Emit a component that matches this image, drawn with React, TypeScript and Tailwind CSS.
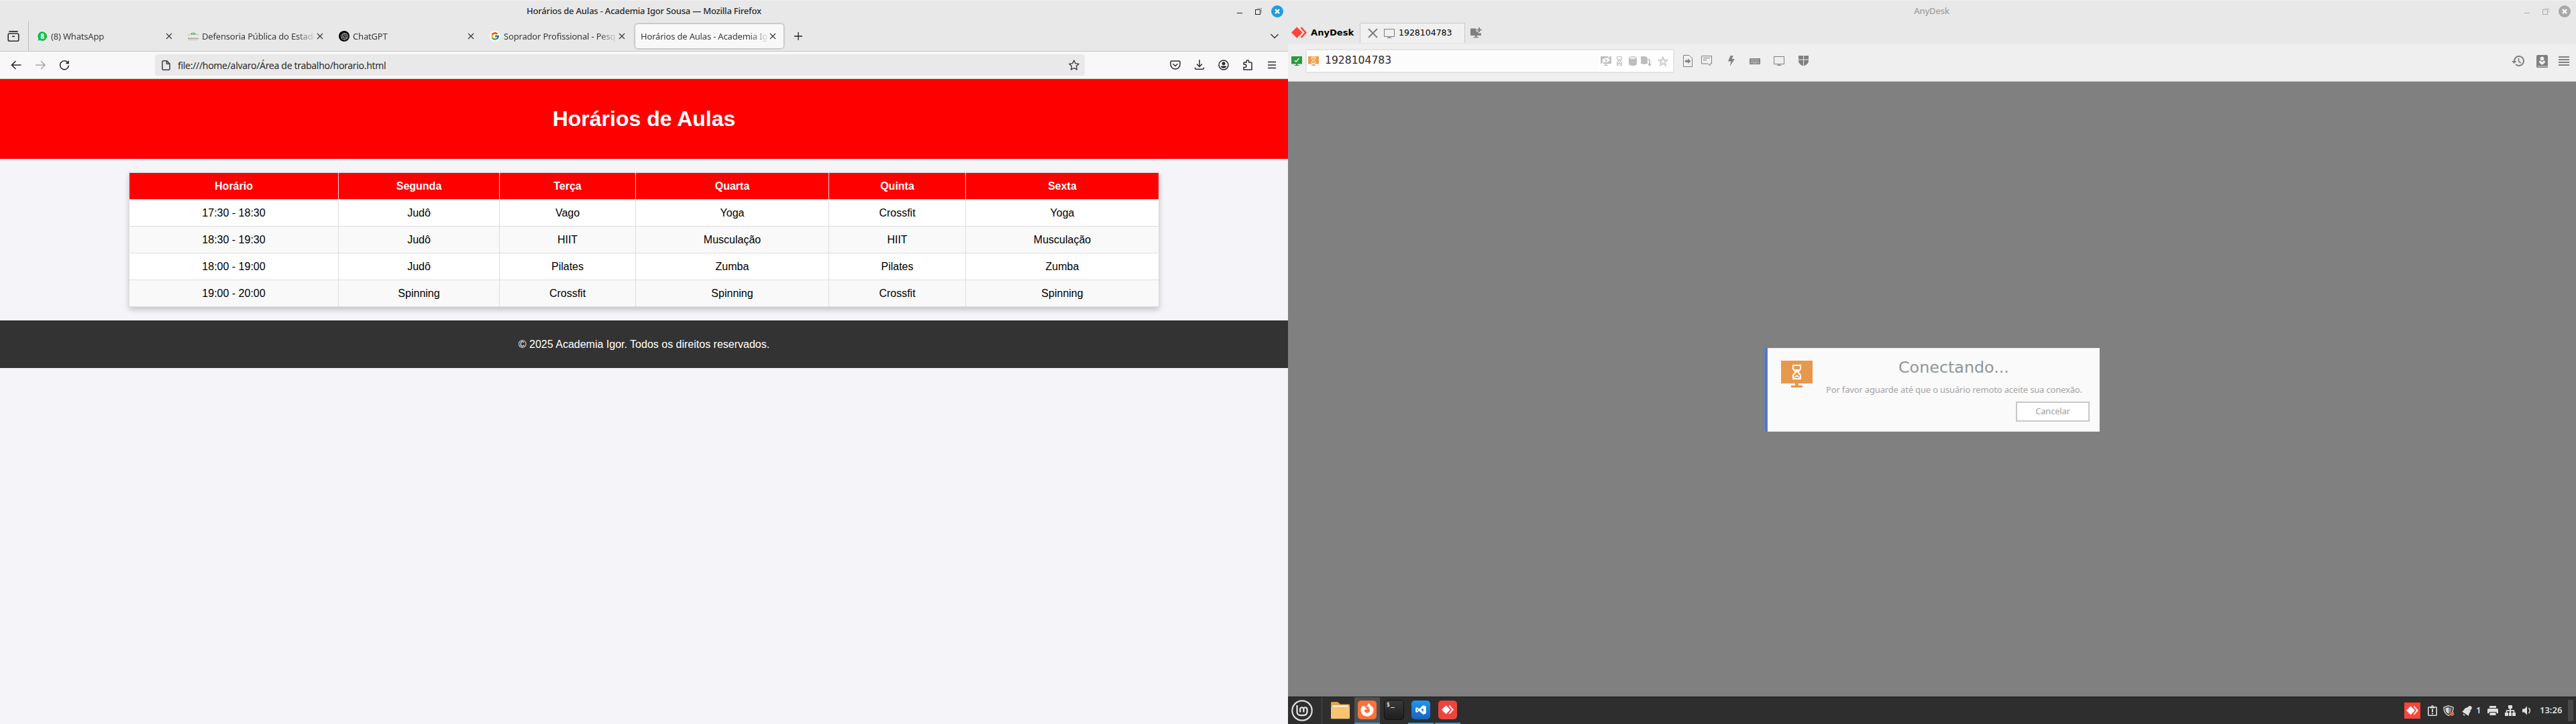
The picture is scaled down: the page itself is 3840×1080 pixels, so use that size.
import type { ReactNode } from 'react';
import { FaFirefoxBrowser } from 'react-icons/fa';
import { FcGoogle } from 'react-icons/fc';
import { SiOpenai } from 'react-icons/si';

const UI = "font-['Noto_Sans',sans-serif]";
const DEJAVU = "font-['DejaVu_Sans',sans-serif]";

/* ---------- window buttons ---------- */

function WindowButtons({ active }: { active: boolean }) {
  const ink = active ? '#222' : '#a9a9a9';
  const faint = active ? '#999' : '#c8c8c8';
  return (
    <svg width="70" height="20" viewBox="0 0 70 20" className="shrink-0" fill="none">
      <path d="M0 12.5h8" stroke={ink} />
      <path d="M30 5.5h6.5v7" stroke={faint} />
      <rect x="27.5" y="7.5" width="7" height="7" stroke={ink} />
      <circle cx="60" cy="10" r="9" fill={active ? '#1f9ede' : '#a9a9a9'} />
      <path d="m57 7 6 6m0-6-6 6" stroke="#fff" strokeWidth="2.3" />
    </svg>
  );
}

/* ---------- Firefox ---------- */

function CloseX() {
  return (
    <svg width="10" height="10" viewBox="0 0 10 10" className="shrink-0" fill="none" stroke="#333" strokeWidth="1.1">
      <path d="m1 1 8 8m0-8-8 8" />
    </svg>
  );
}

function Tab({ icon, label }: { icon: ReactNode; label: string }) {
  return (
    <div className="flex h-full w-[225px] shrink-0 items-center pl-[9px]">
      <span className="flex w-4 shrink-0 justify-center">{icon}</span>
      <span className="ml-[5px] w-[167px] shrink-0 overflow-hidden pt-px whitespace-nowrap mask-[linear-gradient(to_right,#000_142px,transparent_170px)]">
        {label}
      </span>
      <span className="ml-[4px] flex">
        <CloseX />
      </span>
    </div>
  );
}

function WhatsAppIcon() {
  return (
    <span className="relative flex h-4 w-4 items-center justify-center">
      <svg width="16" height="16" viewBox="0 0 16 16" className="absolute inset-0">
        <path d="M8 0a8 8 0 1 1-3.6 15.2L0 16l1-4A8 8 0 0 1 8 0Z" fill="#f4fbf5" />
        <path d="M8 1a7 7 0 1 1-3.4 13.1L1.3 15l1-3.2A7 7 0 0 1 8 1Z" fill="#14bf45" />
      </svg>
      <span className="relative text-[10px] leading-none font-bold tracking-normal text-white">8</span>
    </span>
  );
}

function DefensoriaIcon() {
  return (
    <svg width="16" height="14" viewBox="0 0 16 14" fill="none">
      <path d="M1 6V4M3.2 5V3" stroke="#c9c96a" strokeWidth="1.3" />
      <path d="M5.6 5V2M8 5V1.4M10.4 5V2" stroke="#45a06a" strokeWidth="1.4" />
      <path d="M12.8 5V3M15 6V4" stroke="#a8cf8a" strokeWidth="1.3" />
      <path d="M0 10.4h16" stroke="#999" strokeWidth="1.6" strokeDasharray="2 .5" />
      <path d="M1 12.6h14" stroke="#c4c4c4" />
    </svg>
  );
}

function FirefoxTabs() {
  return (
    <div className={`${UI} flex h-11 shrink-0 items-center text-[13px] tracking-[-0.18px] text-[#3a3a3a]`}>
      <svg width="18" height="16" viewBox="0 0 18 16" className="ml-[11px] shrink-0" fill="none" stroke="#2b2b2b" strokeWidth="1.6">
        <path d="M3 .9h12" strokeLinecap="round" />
        <rect x="1.2" y="4" width="15.6" height="11.2" rx="2" />
        <path d="M7 8.3h4" />
      </svg>
      <div className="ml-[13px] h-full w-px shrink-0 bg-[#bdbdbd]" />
      <div className="ml-[3px] flex h-full shrink-0">
        <Tab icon={<WhatsAppIcon />} label="(8) WhatsApp" />
        <Tab icon={<DefensoriaIcon />} label="Defensoria Pública do Estado" />
        <Tab
          icon={
            <span className="flex h-4 w-4 shrink-0 items-center justify-center rounded-full bg-black">
              <SiOpenai size={11} color="#ddd" />
            </span>
          }
          label="ChatGPT"
        />
        <Tab
          icon={
            <span className="flex h-4 w-4 shrink-0 items-center justify-center rounded-full bg-white">
              <FcGoogle size={14} />
            </span>
          }
          label="Soprador Profissional - Pesquisa"
        />
      </div>
      <div className="ml-px flex h-9 w-[221px] shrink-0 items-center rounded-[4px] bg-[#f8f8f8] pl-2 shadow-[0_0_3px_rgba(0,0,0,0.5)]">
        <span className="w-[190px] overflow-hidden pt-px whitespace-nowrap mask-[linear-gradient(to_right,#000_162px,transparent_192px)]">
          Horários de Aulas - Academia Igor Sousa
        </span>
        <span className="ml-[2px] flex">
          <CloseX />
        </span>
      </div>
      <svg width="12" height="12" viewBox="0 0 12 12" className="ml-4 shrink-0" fill="none" stroke="#222" strokeWidth="1.3">
        <path d="M6 0v12M0 6h12" />
      </svg>
      <svg width="12" height="8" viewBox="0 0 12 8" className="mr-3.5 ml-auto shrink-0" fill="none" stroke="#333" strokeWidth="1.4">
        <path d="m.5 1 5.5 5.6L11.500 1" />
      </svg>
    </div>
  );
}

function FirefoxNav() {
  return (
    <div className="flex h-[42px] shrink-0 items-center border-y border-[#c6c6c6] bg-[#f8f8f8] text-[#2b2b2b]">
      <svg width="88" height="16" viewBox="0 0 88 16" className="ml-4 shrink-0" fill="none" strokeWidth="1.6">
        <path d="M15.500 8H1.500M7.500 2 1.500 8l6 6" stroke="#2b2b2b" />
        <path d="M37 8h14M45 2l6 6-6 6" stroke="#a8a8a8" />
        <path d="M85.300 4.600A6.400 6.400 0 1 0 86.400 8.600" stroke="#2b2b2b" />
        <path d="M86.800 1v5.300h-5.300Z" fill="#2b2b2b" />
      </svg>
      <div className="ml-[127px] flex h-8 w-[1386px] shrink-0 items-center rounded-[4px] bg-[#e9e9e9]">
        <svg width="13" height="15" viewBox="0 0 13 15" className="ml-[10px] shrink-0" fill="none" stroke="#3a3a3a" strokeWidth="1.5">
          <path d="M2.500.8h5.200l4.300 4.300v7.600a1.500 1.500 0 0 1-1.500 1.500h-8A1.500 1.500 0 0 1 1 12.700V2.300A1.500 1.500 0 0 1 2.500.8Z" />
          <path d="M7.500 1v4.300H12" />
        </svg>
        <span className={`${UI} ml-[11px] text-[14px] tracking-[-0.31px] whitespace-nowrap text-[#2b2b2b]`}>
          file:///home/alvaro/Área de trabalho/horario.html
        </span>
        <svg width="16" height="16" viewBox="0 0 16 16" className="mr-2 ml-auto" fill="none" stroke="#333" strokeWidth="1.3" strokeLinejoin="round">
          <path d="m8 1 2.200 4.600 5 .7-3.700 3.500.9 5.100L8 12.500l-4.400 2.400.9-5.100L.8 6.300l5-.7Z" />
        </svg>
      </div>
      <div className="mr-4 ml-auto flex items-center gap-5">
        <svg width="16" height="16" viewBox="0 0 16 16" fill="none" stroke="#2b2b2b" strokeWidth="1.5">
          <path d="M2.500 2h11A1.500 1.500 0 0 1 15 3.500V7A7 7 0 0 1 1 7V3.500A1.500 1.500 0 0 1 2.500 2Z" />
          <path d="m4.500 6.200 3.500 3.300 3.500-3.300" />
        </svg>
        <svg width="16" height="16" viewBox="0 0 16 16" fill="none" stroke="#2b2b2b" strokeWidth="1.5">
          <path d="M8 0v10.500M4 6.500l4 4 4-4" />
          <path d="M1.500 11.500v1a1.700 1.700 0 0 0 1.700 1.700h9.600a1.700 1.700 0 0 0 1.700-1.700v-1" />
        </svg>
        <svg width="16" height="16" viewBox="0 0 16 16" fill="none">
          <circle cx="8" cy="8" r="7" stroke="#2b2b2b" strokeWidth="1.5" />
          <circle cx="8" cy="5.800" r="2.500" fill="#2b2b2b" />
          <path d="M3.800 9.500h8.400c0 2-2 3.300-4.200 3.300s-4.200-1.300-4.200-3.300Z" fill="#2b2b2b" />
        </svg>
        <svg width="16" height="16" viewBox="0 0 16 16" fill="none" stroke="#2b2b2b" strokeWidth="1.5" strokeLinejoin="round">
          <path d="M2 7V5.200c0-.7.500-1.200 1.200-1.200h3V2.500a1.700 1.700 0 0 1 3.400 0V4h3.200c.7 0 1.200.5 1.200 1.200V15H2v-3.500h1.600a2.250 2.250 0 0 0 0-4.500Z" />
        </svg>
        <svg width="16" height="16" viewBox="0 0 16 16" fill="none" stroke="#2b2b2b" strokeWidth="1.500">
          <path d="M2 3.500h12M2 8h12M2 12.500h12" />
        </svg>
      </div>
    </div>
  );
}

const days = ['Horário', 'Segunda', 'Terça', 'Quarta', 'Quinta', 'Sexta'];
const rows = [
  ['17:30 - 18:30', 'Judô', 'Vago', 'Yoga', 'Crossfit', 'Yoga'],
  ['18:30 - 19:30', 'Judô', 'HIIT', 'Musculação', 'HIIT', 'Musculação'],
  ['18:00 - 19:00', 'Judô', 'Pilates', 'Zumba', 'Pilates', 'Zumba'],
  ['19:00 - 20:00', 'Spinning', 'Crossfit', 'Spinning', 'Crossfit', 'Spinning'],
];

function Schedule() {
  return (
    <div className="flex flex-1 flex-col items-center bg-[#f4f4f9] font-['Liberation_Sans',Arial,sans-serif] text-base text-black">
      <header className="flex h-[119px] w-full items-center justify-center bg-[red] pb-px">
        <h1 className="text-[32px] leading-9 font-bold text-white">Horários de Aulas</h1>
      </header>
      <table className="mt-5 w-[1535px] table-fixed border-collapse bg-white text-center leading-[19px] shadow-[0_4px_8px_rgba(0,0,0,0.2)]">
        <colgroup>
          <col className="w-[312px]" />
          <col className="w-[240px]" />
          <col className="w-[203px]" />
          <col className="w-[288px]" />
          <col className="w-[204px]" />
          <col className="w-[288px]" />
        </colgroup>
        <thead>
          <tr className="h-10 bg-[red] text-white">
            {days.map((d) => (
              <th key={d} className="border border-[#ddd] p-0 font-bold">
                {d}
              </th>
            ))}
          </tr>
        </thead>
        <tbody>
          {rows.map((r) => (
            <tr key={r[0]} className="h-10 even:bg-[#f9f9f9]">
              {r.map((c, i) => (
                <td key={i} className="border border-[#ddd] p-0">
                  {c}
                </td>
              ))}
            </tr>
          ))}
        </tbody>
      </table>
      <footer className="mt-5 flex h-[71px] w-full items-center justify-center bg-[#333] text-white">
        © 2025 Academia Igor. Todos os direitos reservados.
      </footer>
    </div>
  );
}

function Firefox() {
  return (
    <section className="flex h-full w-[1920px] shrink-0 flex-col bg-[#e8e8e8]">
      <div className={`${UI} flex h-8 shrink-0 items-center border-t border-[#f0f0f0] text-[13px] font-medium tracking-[-0.2px] text-[#2b2b2b]`}>
        <span className="ml-[76px] flex-1 text-center">Horários de Aulas - Academia Igor Sousa — Mozilla Firefox</span>
        <span className="mr-[6px] flex">
          <WindowButtons active />
        </span>
      </div>
      <FirefoxTabs />
      <FirefoxNav />
      <Schedule />
    </section>
  );
}

/* ---------- AnyDesk ---------- */

function AnyDeskMark({ width, color }: { width: number; color: string }) {
  return (
    <svg width={width} viewBox="0 0 23 17" className="shrink-0" fill={color}>
      <path d="M8.300.200 16.600 8.500 8.300 16.800 0 8.500Z" />
      <path d="M13.600 1.700 15.300 0 23 8.500 15.300 17l-1.700-1.700 6-6.800Z" />
    </svg>
  );
}

function Monitor({ color }: { color: string }) {
  return (
    <svg width="16" height="14" viewBox="0 0 16 14" className="shrink-0" fill="none" stroke={color}>
      <rect x=".5" y=".5" width="15" height="11" />
      <path d="M8 11v2M5 13.300h6" strokeWidth="1.300" />
    </svg>
  );
}

function Hourglass({ width, height, color }: { width: number; height: number; color: string }) {
  return (
    <svg width={width} height={height} viewBox="0 0 13 22" className="shrink-0" fill="none">
      <path d="M.9.9h11.200v6L8.300 11l3.800 4.100v6H.9v-6L4.700 11 .9 6.900Z" stroke={color} strokeWidth="1.800" />
      <path d="M3 7h7l-3.500 4ZM2 20v-2.500l4.500-3.500 4.500 3.500V20l-4.500-3Z" fill={color} />
    </svg>
  );
}

function AnyDeskTabs() {
  return (
    <div className={`${DEJAVU} flex h-[34px] shrink-0 text-black`}>
      <div className="flex h-8 w-[107px] shrink-0 items-center pt-px pl-[5px]">
        <AnyDeskMark width={23} color="#ff4438" />
        <span className="ml-[6px] text-[13.100px] leading-none font-bold">AnyDesk</span>
      </div>
      <div className="mt-[2px] flex h-[30px] w-[157px] shrink-0 items-center border border-b-0 border-[#c8c8c8] bg-[#f0f0f0] pl-[11px]">
        <svg width="15" height="15" viewBox="0 0 15 15" fill="none" stroke="#808080" strokeWidth="2">
          <path d="m1 1 13 13M14 1 1 14" />
        </svg>
        <span className="ml-[9px] flex">
          <Monitor color="#808080" />
        </span>
        <span className="ml-[6px] text-[12.500px] leading-none">1928104783</span>
      </div>
      <svg width="17" height="16" viewBox="0 0 17 16" className="mt-[9px] ml-2 shrink-0" fill="#808080">
        <path d="M0 1.500h8.500V6h3v2.500H16V12H9.500v2H12v1.300H4.500V14H7v-2H0Z" />
        <path d="M12 0h2v2.500h2.700v2H14V7h-2V4.500H9.500v-2H12Z" />
      </svg>
    </div>
  );
}

function AddressBar() {
  return (
    <div className="ml-[5px] flex h-9 w-[550px] shrink-0 items-center rounded-[3px] border-2 border-[#e4e4e4] bg-white">
      <svg width="16" height="14" viewBox="0 0 16 14" className="ml-[2px] shrink-0" fill="#eca04c">
        <path d="M0 0h16v11.500H9V13h2.500v1h-7v-1H7v-1.500H0Z" />
        <path d="M5.500 1.500h5v2.200L8.600 6l1.900 2.300v2.200h-5V8.300L7.400 6 5.500 3.700Z" fill="none" stroke="#fff" />
      </svg>
      <div className={`${DEJAVU} flex h-full w-[418px] items-center bg-[#fcfcfc] pl-[9px] text-[15.600px] text-[#2b2b2b]`}>
        1928104783
      </div>
      <svg width="16" height="14" viewBox="0 0 16 14" className="ml-[2px] shrink-0" fill="#bdbdbd">
        <path d="M0 0h16v11H9v2h2v1H5v-1h2v-2H0Z" />
        <path d="M2 6c2-3 4-3.500 6-3.500S12 3 14 5.500C12 8.500 10 9 8 9S4 8.500 2 6Z" fill="#fff" />
        <circle cx="8" cy="5.700" r="2.200" fill="#bdbdbd" />
        <path d="M1.500 11 13.500 0" stroke="#fff" strokeWidth="1.400" />
      </svg>
      <span className="ml-2 flex">
        <Hourglass width={8} height={14} color="#bdbdbd" />
      </span>
      <svg width="12" height="14" viewBox="0 0 12 14" className="ml-[10px] shrink-0" fill="#bdbdbd">
        <path d="M0 2.500C0 1 2.500 0 6 0s6 1 6 2.500v9C12 13 9.500 14 6 14s-6-1-6-2.500Z" />
        <ellipse cx="6" cy="2.600" rx="4.700" ry="1.500" fill="#eee" />
      </svg>
      <svg width="16" height="15" viewBox="0 0 16 15" className="ml-[6px] shrink-0" fill="#bdbdbd">
        <path d="M0 0h5c2.500 0 4.500 1.500 5 3v7.500l-4 1.500-6-1Z" />
        <path d="M10.500 3.500c2.200 0 3.500 1.300 3.500 4V11h2l-3 4-3-4h2V7Z" />
      </svg>
      <svg width="16" height="15" viewBox="0 0 16 15" className="ml-[9px] shrink-0" fill="none" stroke="#b4b4b4" strokeLinejoin="round">
        <path d="m8 .7 1.900 4.600 5.500.2-4.300 3.300 1.600 5.400L8 11.200l-4.700 3 1.600-5.400L.6 5.500l5.500-.2Z" />
        <path d="m8 3.500 1 3 3 .2-2.300 1.800.8 3L8 9.700l-2.500 1.800.8-3L4 6.700l3-.2Z" strokeWidth=".6" />
      </svg>
    </div>
  );
}

function AnyDeskToolbar() {
  return (
    <div className="h-14 shrink-0 border-b border-[#c0c0c0] bg-[#efefef] pt-[7px]">
      <div className="flex h-9 items-center">
        <svg width="16" height="14" viewBox="0 0 16 14" className="ml-[5px] shrink-0" fill="#2c9a3e">
          <path d="M0 0h16v11.500H9V13h2.500v1h-7v-1H7v-1.500H0Z" />
          <path d="m4.800 6.200 2.300 2L11.400 3" fill="none" stroke="#fff" strokeWidth="1.200" />
        </svg>
        <AddressBar />
        <svg width="14" height="18" viewBox="0 0 14 18" className="ml-[13px] shrink-0" fill="none" stroke="#808080">
          <path d="M.5.500H9L13.500 5v12.500H.5Z" />
          <path d="M3 7.800h4V5.500l4.500 3.800L7 13v-2.300H3Z" fill="#808080" stroke="none" />
        </svg>
        <svg width="16" height="16" viewBox="0 0 16 16" className="ml-[13px] shrink-0" fill="none" stroke="#808080">
          <path d="M.5.500h15v11.500H13v3L10 12H.5Z" />
          <path d="M3 3.500h10M3 6.500h5" />
        </svg>
        <svg width="10" height="16" viewBox="0 0 10 16" className="ml-6 shrink-0" fill="#808080">
          <path d="M3.500 0h4.200L5.500 5H10L2.500 16l2-7.500H0Z" />
        </svg>
        <svg width="16" height="9" viewBox="0 0 16 9" className="ml-[22px] shrink-0">
          <path d="M0 0h16v9H0Z" fill="#808080" />
          <path d="M1.500 2h13M2 4.300h12.500" stroke="#efefef" strokeDasharray="1.200 .9" />
          <path d="M1.500 6.800h2m1 0h7m1 0h2" stroke="#efefef" />
        </svg>
        <span className="ml-5 flex">
          <Monitor color="#808080" />
        </span>
        <svg width="15" height="16" viewBox="0 0 15 16" className="ml-[21px] shrink-0" fill="#808080">
          <path d="M0 0h7v5.500H0ZM8 0h7v5.500H8ZM0 6.500h7v9C3 14 0 11 0 8ZM8 6.500h7V8c0 3-3 6-7 7.500Z" />
        </svg>
        <svg width="19" height="16" viewBox="0 0 19 16" className="ml-auto shrink-0" fill="none" stroke="#808080" strokeWidth="2">
          <path d="M4 8a7 7 0 1 1 2.200 5" />
          <path d="M10.500 3.800V8.500l3.300 2.500" strokeWidth="1.700" />
          <path d="M0 8h7.500l-3.700 4Z" fill="#808080" stroke="none" />
        </svg>
        <svg width="17" height="19" viewBox="0 0 17 19" className="ml-[18px] shrink-0">
          <rect width="17" height="19" rx="1.500" fill="#808080" />
          <path d="M1.500 17h15" stroke="#ddd" />
          <circle cx="8.500" cy="5.300" r="2.900" fill="#efefef" />
          <path d="M3.800 9.500 6 8.300l2.500 2.200L11 8.300l2.200 1.200c0 2-2 3.700-4.700 5.300-2.700-1.600-4.700-3.300-4.700-5.300Z" fill="#efefef" />
        </svg>
        <svg width="16" height="14" viewBox="0 0 16 14" className="mr-[10px] ml-4 shrink-0" fill="#808080">
          <path d="M0 0h16v2H0ZM0 4h16v2H0ZM0 8h16v2H0ZM0 12h16v2H0Z" />
        </svg>
      </div>
    </div>
  );
}

function ConnectingDialog() {
  return (
    <div className="flex h-[125px] w-[500px] shrink-0 border border-l-0 border-[#e6e6e6] bg-[#fafafa]">
      <div className="-my-px w-[5px] shrink-0 border-x-2 border-x-[#5c82cc] bg-[#466aae]" />
      <svg width="47" height="40" viewBox="0 0 47 40" className="mt-[18px] ml-5 shrink-0" fill="#e8984c">
        <path d="M0 0h47v34H26v3h6v3H15v-3h6v-3H0Z" />
        <path d="M18 7h11v5.500L25 17l4 4.500V27H18v-5.500l4-4.500-4-4.500Z" fill="none" stroke="#fff" strokeWidth="2" />
        <path d="M20 13h7l-3.500 4ZM19 25l4.500-4 4.500 4v1l-4.500-2.500L19 26Z" fill="#fff" />
      </svg>
      <div className="ml-[20px] flex flex-1 flex-col pr-[14px]">
        <h2 className={`${DEJAVU} mt-[12px] ml-[108px] text-[23.800px] leading-8 text-[#909696]`}>Conectando...</h2>
        <p className={`${UI} mt-[8px] text-[13px] leading-[18px] tracking-[-0.16px] whitespace-nowrap text-[#a4a4a4]`}>
          Por favor aguarde até que o usuário remoto aceite sua conexão.
        </p>
        <button className={`${UI} mt-[9px] flex h-[30px] w-[110px] items-center justify-center self-end border-2 border-[#c8c8c8] bg-white text-[13px] tracking-[-0.2px] text-[#a0a0a0]`}>
          Cancelar
        </button>
      </div>
    </div>
  );
}

/* ---------- taskbar ---------- */

function Launcher({ active, running, children }: { active?: boolean; running?: boolean; children: ReactNode }) {
  return (
    <div
      className={`flex h-full w-[38px] shrink-0 items-center justify-center border-b-2 pb-px ${
        active ? 'bg-[#505050]' : ''
      } ${running ? 'border-[#2a9bd8]' : 'border-transparent'}`}
    >
      {children}
    </div>
  );
}

function Taskbar() {
  return (
    <div className={`${UI} flex h-[41px] shrink-0 items-center border-t border-[#1f1f1f] bg-[#2e2e2e] text-white`}>
      <svg width="32" height="32" viewBox="0 0 32 32" className="ml-[5px] shrink-0" fill="none" stroke="#dedede">
        <circle cx="16" cy="16" r="14.700" strokeWidth="2.200" />
        <path
          d="M8.500 8v10a5 5 0 0 0 5 5h5a5 5 0 0 0 5-5v-4a2.600 2.600 0 0 0-5.200 0v4.500M18.300 14a2.600 2.600 0 0 0-5.200 0v4.500"
          strokeWidth="2.400"
        />
      </svg>
      <div className="ml-[13px] h-full w-px shrink-0 bg-[#484848]" />
      <svg width="28" height="26" viewBox="0 0 28 26" className="ml-[13px] shrink-0">
        <path d="M0 1.500C0 .6.600 0 1.500 0H10l4 3.500h12.500c.9 0 1.500.6 1.500 1.500v8H0Z" fill="#dca44c" />
        <rect x="2" y="5" width="24" height="5" fill="#f0f0f0" />
        <path d="M0 7.500h28V24c0 .8-.5 1.300-1.300 1.300H1.300C.5 25.300 0 24.800 0 24Z" fill="#f8c470" />
      </svg>
      <div className="ml-[7px] flex h-full shrink-0 gap-[2px]">
        <Launcher active running>
          <span className="flex h-7 w-7 items-center justify-center rounded-[5px] bg-[#ff7139]">
            <FaFirefoxBrowser size={20} color="#fff" />
          </span>
        </Launcher>
        <Launcher>
          <span className="flex h-[30px] w-[30px] items-start rounded-[5px] border border-[#111] bg-linear-to-b from-[#3a3a3a] to-[#1e1e1e] pt-[3px] pl-[3px] font-['DejaVu_Sans_Mono',monospace] text-[8px] leading-none font-bold text-[#e0e0e0]">
            $<span className="mt-[7px] ml-px h-px w-[6px] bg-[#e0e0e0]" />
          </span>
        </Launcher>
        <Launcher running>
          <span className="flex h-7 w-7 items-center justify-center rounded-[5px] bg-linear-to-b from-[#2196f3] to-[#1565c0]">
            <svg width="16" height="16" viewBox="0 0 16 16" fill="#fff" fillRule="evenodd">
              <path d="M11.700 1 15.800 2.800v10.400L11.700 15 5.200 9.600 2.200 12 .2 11V5l2-1 3 2.400ZM11.700 5.200 8.200 8l3.500 2.800ZM2 6.200v3.600L3.900 8Z" />
            </svg>
          </span>
        </Launcher>
        <Launcher running>
          <span className="flex h-7 w-7 items-center justify-center rounded-[5px] bg-[#ef443b]">
            <AnyDeskMark width={18} color="#fff" />
          </span>
        </Launcher>
      </div>

      <span className="ml-auto flex h-6 w-6 shrink-0 items-center justify-center bg-[#ff443a]">
        <AnyDeskMark width={18} color="#fff" />
      </span>
      <svg width="14" height="16" viewBox="0 0 14 16" className="ml-[11px] shrink-0" fill="none" stroke="#dedede" strokeWidth="1.600">
        <rect x=".8" y="2.800" width="12.400" height="12.400" rx="1" />
        <path d="M3.500 3.500h7M7 5.800v4.500M7 11.500v1.800" strokeWidth="2" />
        <circle cx="7" cy="1.900" r="1.300" strokeWidth="1.200" />
      </svg>
      <svg width="17" height="16" viewBox="0 0 17 16" className="ml-[9px] shrink-0">
        <path d="M8 .8 15 3c.2 6-2 10-7 12.300C3 13 .8 9 1 3Z" fill="none" stroke="#cfcfcf" strokeWidth="1.400" />
        <path d="M8 3v10C5 11.500 3.300 8.500 3.200 4.500Z" fill="#dedede" />
        <path d="M8 3v10c3-1.500 4.700-4.500 4.800-8.500Z" fill="#8a8a8a" />
        <circle cx="13.300" cy="12.800" r="3.100" fill="#d9683c" />
      </svg>
      <svg width="15" height="15" viewBox="0 0 15 15" className="ml-[11px] shrink-0" fill="#dedede">
        <path d="M0 8.500C3 7.500 3 3.500 7 2.500l2-.5c0 3 1.500 4.500 4.200 4.500-.7 3-3 4.500-3.200 8.500Z" />
        <circle cx="11.800" cy="3" r="2.900" />
        <path d="M2 11.500 5 14a2 2 0 0 1-3-2.500Z" />
      </svg>
      <span className="ml-[6px] w-[8px] shrink-0 text-[13px] font-semibold text-[#dedede]">1</span>
      <svg width="16" height="14" viewBox="0 0 16 14" className="ml-[9px] shrink-0" fill="#dedede">
        <path d="M3 0h10v3H3ZM1.500 4h13A1.500 1.500 0 0 1 16 5.500V11h-2.500V9h-11v2H0V5.500A1.500 1.500 0 0 1 1.500 4ZM3.500 10h9v4h-9Z" />
      </svg>
      <svg width="16" height="16" viewBox="0 0 16 16" className="ml-[10px] shrink-0" fill="#dedede">
        <path d="M5 0h6v5H9v2.300h5.300V11H16v5h-5v-5h1.700V9H9v2h1v5H6v-5h1V9H3.300v2H5v5H0v-5h1.700V7.300H7V5H5Z" />
      </svg>
      <svg width="13" height="14" viewBox="0 0 13 14" className="ml-[10px] shrink-0" fill="#dedede">
        <path d="M0 4.500h3L7 .5v13l-4-4H0Z" />
        <path d="M9.500 3c2.300 2.500 2.300 5.500 0 8" fill="none" stroke="#dedede" strokeWidth="1.500" />
      </svg>
      <span className="ml-[13px] w-[34px] shrink-0 text-[13px] font-semibold text-[#dedede]">13:26</span>
      <span className="mr-1 ml-2 h-8 w-2 shrink-0 bg-[#484848]" />
    </div>
  );
}

function AnyDesk() {
  return (
    <section className="flex h-full w-[1920px] shrink-0 flex-col bg-[#e8e8e8]">
      <div className={`${UI} flex h-8 shrink-0 items-center border-t border-[#f0f0f0] text-[13px] font-medium tracking-[-0.2px] text-[#a0a0a0]`}>
        <span className="ml-[76px] flex-1 text-center">AnyDesk</span>
        <span className="mr-[7px] flex">
          <WindowButtons active={false} />
        </span>
      </div>
      <AnyDeskTabs />
      <AnyDeskToolbar />
      <main className="flex flex-1 justify-center bg-[#808080] pt-[397px]">
        <ConnectingDialog />
      </main>
      <Taskbar />
    </section>
  );
}

export default function App() {
  return (
    <div className="flex h-[1080px] w-[3840px] overflow-hidden">
      <Firefox />
      <AnyDesk />
    </div>
  );
}
